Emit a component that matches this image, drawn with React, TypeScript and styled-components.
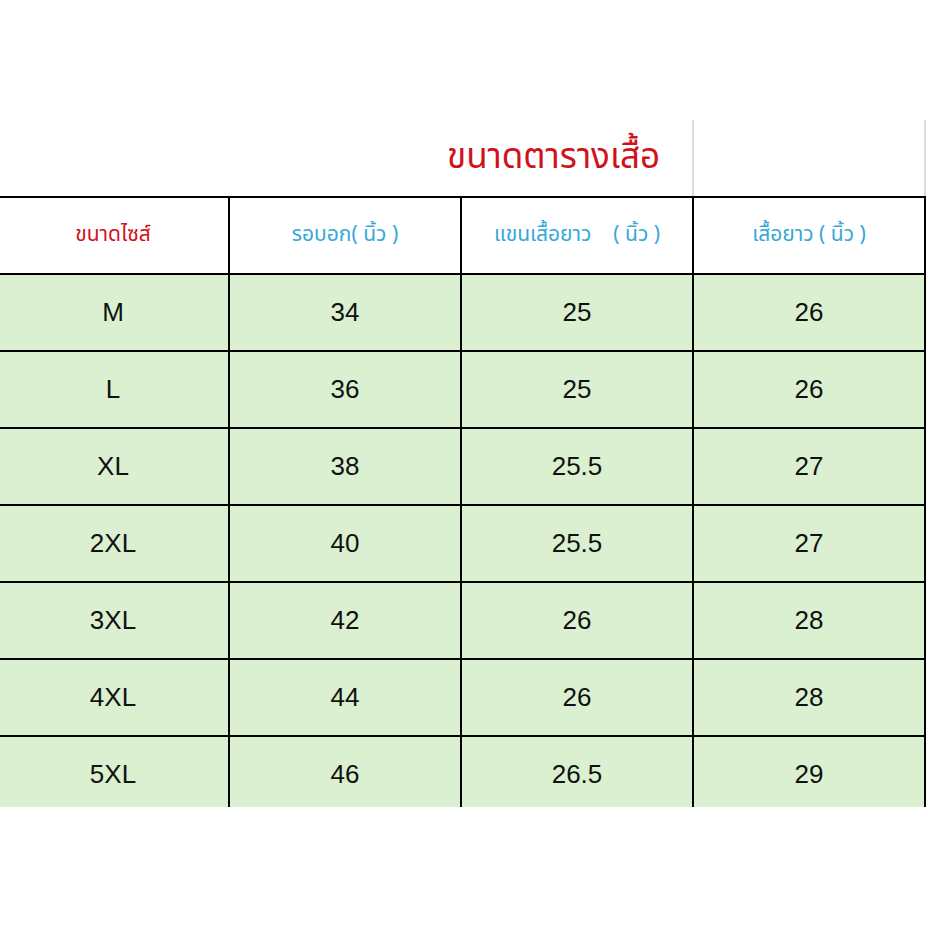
import React from 'react';
import styled, { createGlobalStyle } from 'styled-components';

const GlobalStyle = createGlobalStyle`
    html, body {
        margin:0;
        padding:0;
        background:#fff;
    }
    body {
        width:928px;
        height:928px;
        overflow:hidden;
        font-family:"Liberation Sans", "Noto Sans", sans-serif;
    }
`;

const Page = styled.div`
    padding-top:120px;
    width:928px;
`;

const Table = styled.div`
    margin-left:-2px;
    display:grid;
    grid-template-columns:repeat(4, 232px) 10px;
`;

const TitleCell = styled.div`
    grid-column:span 3;
    height:76px;
    border-right:2px solid #dcdcdc;
    display:flex;
    align-items:center;
    justify-content:flex-end;
    padding-right:32px;
    padding-bottom:1px;
    box-sizing:border-box;
    color:#d2121b;
    font-size:35px;
    font-family:"Noto Sans Thai", "Tahoma", "DejaVu Sans", sans-serif;
`;

const BlankCell = styled.div`
    height:76px;
    border-right:2px solid #dcdcdc;
    box-sizing:border-box;
`;

const Spacer = styled.div`
    background:#fff;
`;

const HeadCell = styled.div<{ $red?: boolean }>`
    height:77px;
    box-sizing:border-box;
    border-top:2px solid #000;
    border-right:2px solid #000;
    display:flex;
    align-items:center;
    justify-content:center;
    padding-bottom:2px;
    color:${p => p.$red ? '#d2121b' : '#38a8d8'};
    font-size:21px;
    font-family:"Noto Sans Thai", "Tahoma", "DejaVu Sans", sans-serif;
    white-space:pre;
`;

const Cell = styled.div<{ $last?: boolean }>`
    box-sizing:border-box;
    border-top:2px solid #000;
    border-right:2px solid #000;
    background:#daf0d0;
    display:flex;
    align-items:center;
    justify-content:center;
    color:#111;
    font-size:26px;
    height:${p => p.$last ? '72px' : '77px'};
    padding-top:${p => p.$last ? '5px' : '0'};
`;

const rows = [
    ['M', '34', '25', '26'],
    ['L', '36', '25', '26'],
    ['XL', '38', '25.5', '27'],
    ['2XL', '40', '25.5', '27'],
    ['3XL', '42', '26', '28'],
    ['4XL', '44', '26', '28'],
    ['5XL', '46', '26.5', '29'],
];

const App = () => {
    return (
        <Page>
            <GlobalStyle />
            <Table>
                <TitleCell>ขนาดตารางเสื้อ</TitleCell>
                <BlankCell />
                <Spacer />

                <HeadCell $red>ขนาดไซส์</HeadCell>
                <HeadCell>รอบอก( นิ้ว )</HeadCell>
                <HeadCell>แขนเสื้อยาว    ( นิ้ว )</HeadCell>
                <HeadCell>เสื้อยาว ( นิ้ว )</HeadCell>
                <Spacer />

                {rows.map((r, i) => (
                    <React.Fragment key={r[0]}>
                        {r.map((v, j) => (
                            <Cell key={j} $last={i === rows.length - 1}>{v}</Cell>
                        ))}
                        <Spacer />
                    </React.Fragment>
                ))}
            </Table>
        </Page>
    );
};

export default App;
